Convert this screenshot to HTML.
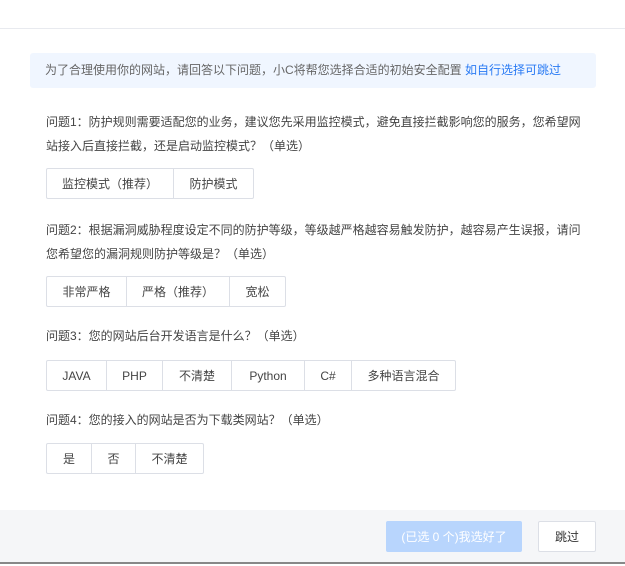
<!DOCTYPE html>
<html><head><meta charset="utf-8"><style>
*{margin:0;padding:0;box-sizing:border-box}
body{width:625px;height:566px;position:relative;background:#fff;font-family:"Liberation Sans","Noto Sans CJK SC",sans-serif;font-size:12px;color:#444;overflow:hidden}
.top{position:absolute;left:0;top:28px;width:625px;height:1px;background:#e8eaef}
.info{position:absolute;left:30px;top:53px;width:566px;height:35px;background:#f0f6ff;border-radius:3px;color:#666;line-height:35px;padding-left:15px}
.info a{color:#2a7bf4;text-decoration:none}
.q{position:absolute;left:46px;width:540px;line-height:24px;color:#444}
.g{position:absolute;left:46px;height:31px;display:flex;border:1px solid #dcdfe6;border-radius:2px}
.g span{display:flex;align-items:center;justify-content:center;height:100%;border-right:1px solid #dcdfe6;color:#444}
.g span:last-child{border-right:none}
.foot{position:absolute;left:0;top:510px;width:625px;height:54px;background:#f5f6f8;border-bottom:2px solid #888}
.b1{position:absolute;left:386px;top:521px;width:136px;height:31px;background:#b8d5fd;border-radius:2px;color:#fff;display:flex;align-items:center;justify-content:center}
.b2{position:absolute;left:538px;top:521px;width:58px;height:31px;background:#fff;border:1px solid #dcdfe6;border-radius:2px;display:flex;align-items:center;justify-content:center;color:#333}
</style></head><body>
<div class="top"></div>
<div class="info">为了合理使用你的网站，请回答以下问题，小C将帮您选择合适的初始安全配置 <a>如自行选择可跳过</a></div>
<div class="q" style="top:110px">问题1：防护规则需要适配您的业务，建议您先采用监控模式，避免直接拦截影响您的服务，您希望网站接入后直接拦截，还是启动监控模式？（单选）</div>
<div class="g" style="top:168px"><span style="width:127px">监控模式（推荐）</span><span style="width:79px">防护模式</span></div>
<div class="q" style="top:218px">问题2：根据漏洞威胁程度设定不同的防护等级，等级越严格越容易触发防护，越容易产生误报，请问您希望您的漏洞规则防护等级是？（单选）</div>
<div class="g" style="top:276px"><span style="width:80px">非常严格</span><span style="width:103px">严格（推荐）</span><span style="width:55px">宽松</span></div>
<div class="q" style="top:324px">问题3：您的网站后台开发语言是什么？（单选）</div>
<div class="g" style="top:360px"><span style="width:60px">JAVA</span><span style="width:56px">PHP</span><span style="width:69px">不清楚</span><span style="width:73px">Python</span><span style="width:47px">C#</span><span style="width:103px">多种语言混合</span></div>
<div class="q" style="top:408px">问题4：您的接入的网站是否为下载类网站？（单选）</div>
<div class="g" style="top:443px"><span style="width:45px">是</span><span style="width:44px">否</span><span style="width:67px">不清楚</span></div>
<div class="foot"></div>
<div class="b1">(已选 0 个)我选好了</div>
<div class="b2">跳过</div>
</body></html>
